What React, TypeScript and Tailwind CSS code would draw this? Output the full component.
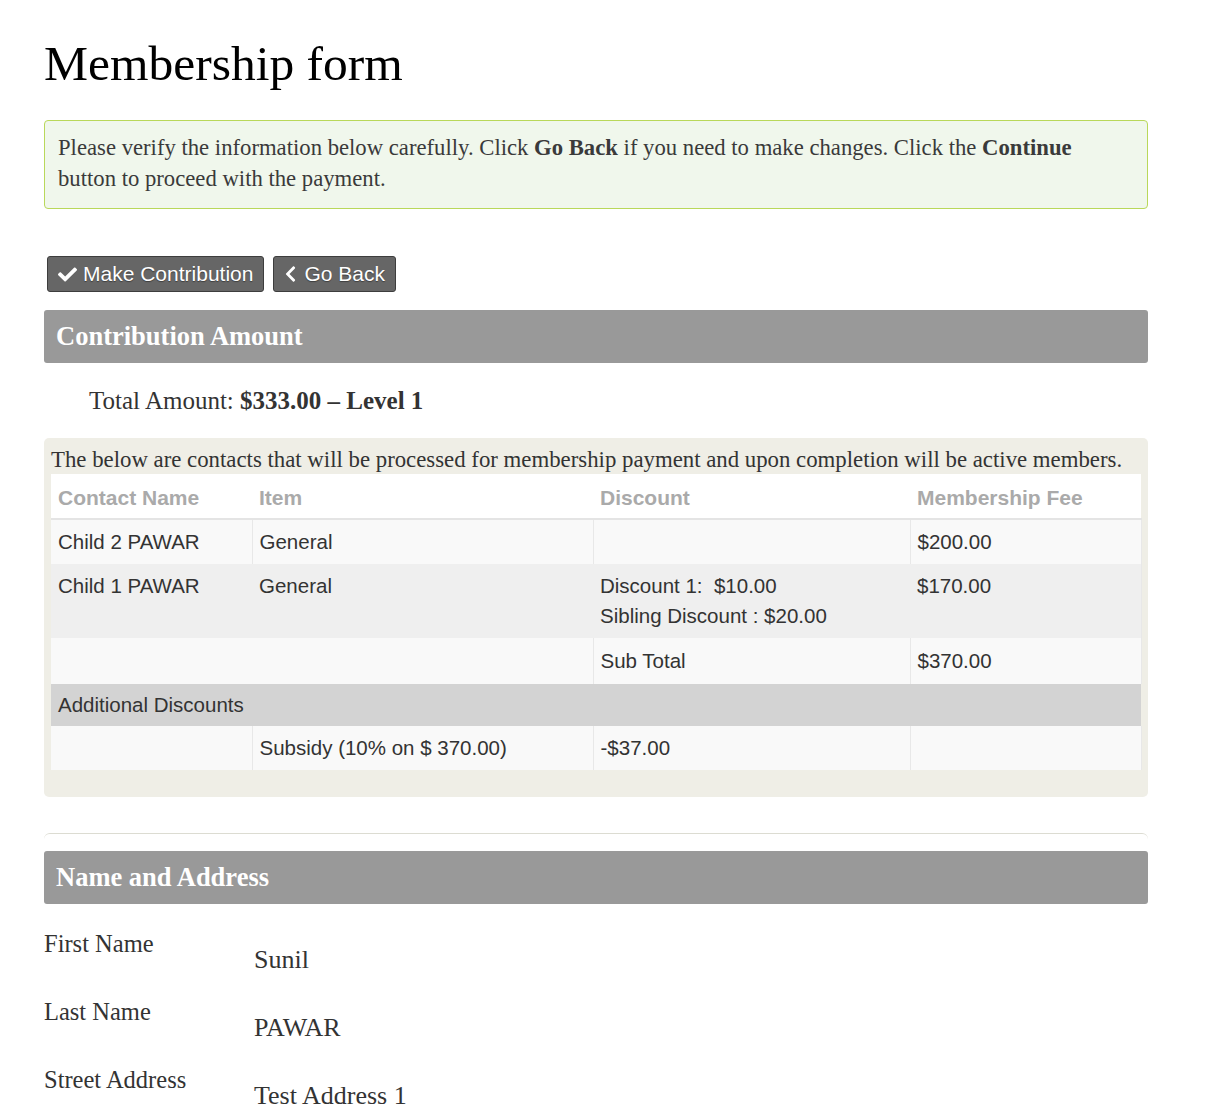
import { FaCheck, FaChevronLeft } from "react-icons/fa";

const serif = "font-['Liberation_Serif',serif]";
const sans = "font-['Liberation_Sans',Arial,sans-serif]";

const fields = [
  { label: "First Name", value: "Sunil" },
  { label: "Last Name", value: "PAWAR" },
  { label: "Street Address", value: "Test Address 1" },
];

function SectionHeader({ title }: { title: string }) {
  return (
    <div className={`bg-[#999999] rounded-[3px] h-[53px] flex items-center px-3 ${serif}`}>
      <h3 className="text-white font-bold text-[26.5px]">{title}</h3>
    </div>
  );
}

function App() {
  return (
    <div className={`w-[1224px] min-h-[1104px] bg-white text-[#333] ${serif}`}>
      <div className="w-[1104px] ml-[44px] pt-[36px]">
        <h1 className="text-[49.5px] leading-[56px] text-black">Membership form</h1>

        <div className="mt-[28px] border border-[#b9d85a] bg-[#f0f7ec] rounded-[4px] px-[13px] pt-[11px] pb-[14px] text-[22.7px] leading-[31px] text-[#3a3a3a]">
          Please verify the information below carefully. Click <b>Go Back</b> if you need to make changes. Click the{" "}
          <b>Continue</b>
          <br />
          button to proceed with the payment.
        </div>

        <div className={`mt-[47px] ml-[3px] flex gap-[9px] ${sans}`}>
          <button className="h-[36px] px-[10px] flex items-center gap-[6px] bg-[#666] border border-[#3d3d3d] rounded-[3px] text-white text-[21px] [text-shadow:0_1px_1px_rgba(0,0,0,0.4)]">
            <FaCheck className="w-[19px] h-[19px]" />
            Make Contribution
          </button>
          <button className="h-[36px] px-[10px] flex items-center gap-[7px] bg-[#666] border border-[#3d3d3d] rounded-[3px] text-white text-[21px] [text-shadow:0_1px_1px_rgba(0,0,0,0.4)]">
            <FaChevronLeft className="w-[13px] h-[18px]" />
            Go Back
          </button>
        </div>

        <div className="mt-[18px]">
          <SectionHeader title="Contribution Amount" />
        </div>

        <div className="mt-[22px] pl-[45px] text-[25px] leading-[32px] text-[#333]">
          Total Amount: <b>$333.00 – Level 1</b>
        </div>

        <div className="mt-[21px] bg-[#efeee6] rounded-[5px] px-[7px] pt-[7px] pb-[27px]">
          <p className="text-[22.8px] leading-[29px] text-[#333] whitespace-nowrap">
            The below are contacts that will be processed for membership payment and upon completion will be active members.
          </p>
          <table className={`w-[1090px] border-collapse table-fixed text-[20.5px] leading-[30px] text-[#333] ${sans}`}>
            <colgroup>
              <col className="w-[201px]" />
              <col className="w-[341px]" />
              <col className="w-[317px]" />
              <col className="w-[231px]" />
            </colgroup>
            <thead>
              <tr className="bg-white text-[#aaa] font-bold text-left text-[21px]">
                <th className="px-[7px] pt-[9px] pb-[5px] border-b-2 border-[#e4e4e4]">Contact Name</th>
                <th className="px-[7px] pt-[9px] pb-[5px] border-b-2 border-[#e4e4e4]">Item</th>
                <th className="px-[7px] pt-[9px] pb-[5px] border-b-2 border-[#e4e4e4]">Discount</th>
                <th className="px-[7px] pt-[9px] pb-[5px] border-b-2 border-[#e4e4e4]">Membership Fee</th>
              </tr>
            </thead>
            <tbody>
              <tr className="bg-[#f9f9f9] align-top">
                <td className="px-[7px] py-[7px] border-r border-[#e8e8e8]">Child 2 PAWAR</td>
                <td className="px-[7px] py-[7px] border-r border-[#e8e8e8]">General</td>
                <td className="px-[7px] py-[7px] border-r border-[#e8e8e8]"></td>
                <td className="px-[7px] py-[7px] border-r border-[#e8e8e8]">$200.00</td>
              </tr>
              <tr className="bg-[#efefef] align-top">
                <td className="px-[7px] py-[7px]">Child 1 PAWAR</td>
                <td className="px-[7px] py-[7px]">General</td>
                <td className="px-[7px] py-[7px] whitespace-pre">
                  {"Discount 1:  $10.00"}
                  <br />
                  Sibling Discount : $20.00
                </td>
                <td className="px-[7px] py-[7px] border-r border-[#e8e8e8]">$170.00</td>
              </tr>
              <tr className="bg-[#f9f9f9] align-top">
                <td className="px-[7px] py-[8px]"></td>
                <td className="px-[7px] py-[8px] border-r border-[#e8e8e8]"></td>
                <td className="px-[7px] py-[8px] border-r border-[#e8e8e8]">Sub Total</td>
                <td className="px-[7px] py-[8px] border-r border-[#e8e8e8]">$370.00</td>
              </tr>
              <tr className="bg-[#d3d3d3] align-top">
                <td colSpan={4} className="px-[7px] py-[6px]">
                  Additional Discounts
                </td>
              </tr>
              <tr className="bg-[#f9f9f9] align-top">
                <td className="px-[7px] py-[7px] border-r border-[#e8e8e8]"></td>
                <td className="px-[7px] py-[7px] border-r border-[#e8e8e8]">Subsidy (10% on $ 370.00)</td>
                <td className="px-[7px] py-[7px] border-r border-[#e8e8e8]">-$37.00</td>
                <td className="px-[7px] py-[7px] border-r border-[#e8e8e8]"></td>
              </tr>
            </tbody>
          </table>
        </div>

        <div className="mt-[36px] h-[18px] border-t border-[#dcdcd2] rounded-t-[6px]" />

        <SectionHeader title="Name and Address" />

        <div className="mt-[26px] flex flex-col gap-[24px]">
          {fields.map((f) => (
            <div key={f.label} className="flex">
              <div className="w-[210px] text-[24.5px] leading-[28px] text-[#333]">{f.label}</div>
              <div className="pt-[16px] text-[26px] leading-[28px] text-[#333]">{f.value}</div>
            </div>
          ))}
        </div>
      </div>
    </div>
  );
}

export default App;
